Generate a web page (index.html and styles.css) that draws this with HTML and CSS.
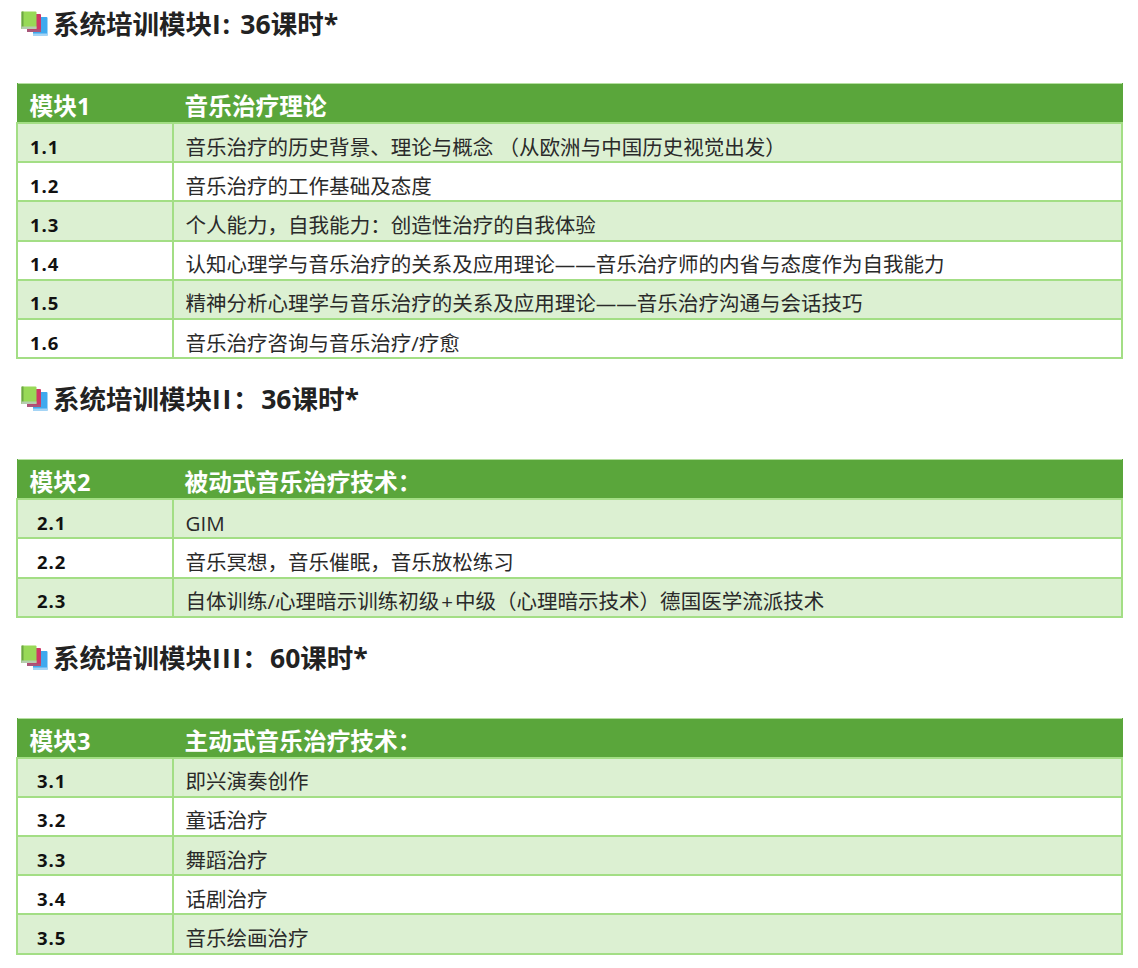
FILE: index.html
```html
<!DOCTYPE html>
<html lang="zh-CN">
<head>
<meta charset="utf-8">
<title>系统培训模块</title>
<link rel="stylesheet" href="styles.css">
</head>
<body>
<svg width="0" height="0" class="defs" aria-hidden="true">
  <symbol id="books" viewBox="0 0 28 26">
    <rect x="12" y="6" width="14.5" height="19" rx="1" fill="#3fa9ee"/>
    <rect x="12" y="22.5" width="14.5" height="2.5" fill="#a4d4f5"/>
    <rect x="6" y="3" width="14" height="18" rx="1" fill="#cf3767"/>
    <rect x="6" y="18.5" width="14" height="2.5" fill="#a8577a"/>
    <rect x="0.5" y="0.5" width="15" height="17.5" rx="1" fill="#98d957"/>
    <rect x="0.5" y="0.5" width="2" height="17.5" fill="#6da544"/>
    <rect x="0.5" y="15.5" width="15" height="2.5" fill="#b6cdb0"/>
  </symbol>
</svg>

<section class="module module-1">
  <h2 class="title"><svg class="icon"><use href="#books"/></svg>系统培训模块<span class="wide">I: </span>36课时*</h2>
  <table class="grid">
    <thead><tr><th class="num">模块1</th><th class="name">音乐治疗理论</th></tr></thead>
    <tbody>
      <tr><td class="num">1.1</td><td>音乐治疗的历史背景、理论与概念 （从欧洲与中国历史视觉出发）</td></tr>
      <tr><td class="num">1.2</td><td>音乐治疗的工作基础及态度</td></tr>
      <tr><td class="num">1.3</td><td>个人能力，自我能力：创造性治疗的自我体验</td></tr>
      <tr><td class="num">1.4</td><td>认知心理学与音乐治疗的关系及应用理论——音乐治疗师的内省与态度作为自我能力</td></tr>
      <tr><td class="num">1.5</td><td>精神分析心理学与音乐治疗的关系及应用理论——音乐治疗沟通与会话技巧</td></tr>
      <tr><td class="num">1.6</td><td>音乐治疗咨询与音乐治疗/疗愈</td></tr>
    </tbody>
  </table>
</section>

<section class="module module-2">
  <h2 class="title"><svg class="icon"><use href="#books"/></svg>系统培训模块<span class="wide">II：</span>36课时*</h2>
  <table class="grid indented">
    <thead><tr><th class="num">模块2</th><th class="name">被动式音乐治疗技术：</th></tr></thead>
    <tbody>
      <tr><td class="num">2.1</td><td>GIM</td></tr>
      <tr><td class="num">2.2</td><td>音乐冥想，音乐催眠，音乐放松练习</td></tr>
      <tr><td class="num">2.3</td><td>自体训练/心理暗示训练初级<span class="plus">+</span>中级（心理暗示技术）德国医学流派技术</td></tr>
    </tbody>
  </table>
</section>

<section class="module module-3">
  <h2 class="title"><svg class="icon"><use href="#books"/></svg>系统培训模块<span class="wide">III：</span>60课时*</h2>
  <table class="grid indented">
    <thead><tr><th class="num">模块3</th><th class="name">主动式音乐治疗技术：</th></tr></thead>
    <tbody>
      <tr><td class="num">3.1</td><td>即兴演奏创作</td></tr>
      <tr><td class="num">3.2</td><td>童话治疗</td></tr>
      <tr><td class="num">3.3</td><td>舞蹈治疗</td></tr>
      <tr><td class="num">3.4</td><td>话剧治疗</td></tr>
      <tr><td class="num">3.5</td><td>音乐绘画治疗</td></tr>
    </tbody>
  </table>
</section>
</body>
</html>
```

FILE: styles.css
```css
html, body {
  margin: 0;
  padding: 0;
  background: #fff;
}
body {
  width: 1138px;
  height: 968px;
  overflow: hidden;
  padding: 5px 15px 0 16px;
  box-sizing: border-box;
  font-family: "Open Sans", "Noto Sans CJK SC", sans-serif;
  color: #2a2a2a;
}
.defs {
  position: absolute;
}
.module-2,
.module-3 {
  margin-top: 21px;
}
.title {
  display: flex;
  align-items: center;
  height: 38px;
  margin: 0 0 41px;
  font-size: 26.5px;
  font-weight: 700;
  line-height: 38px;
  color: #222;
  white-space: pre;
}
.module-1 .title {
  margin-bottom: 40px;
}
.wide {
  letter-spacing: 1.7px;
}
.module-3 .wide {
  letter-spacing: 1.3px;
}
.plus {
  margin: 0 2px;
}
.icon {
  width: 28px;
  height: 26px;
  margin: 0 4px 0 5px;
  flex: none;
}
.grid {
  width: 1107px;
  table-layout: fixed;
  border-collapse: collapse;
}
.grid thead tr {
  border-top: 1px solid #b5dfa0;
}
.grid th, .grid td {
  text-align: left;
  vertical-align: middle;
  white-space: nowrap;
}
.grid th {
  height: 33px;
  padding: 4px 0 0 11.5px;
  background: #5aa63b;
  color: #fff;
  font-size: 23.7px;
  font-weight: 700;
  border: 0;
  border-left: 1px solid #5aa63b;
}
.grid th.name {
  border-left: 0;
  border-right: 1px solid #5aa63b;
}
.grid td {
  height: 29.2px;
  padding: 8px 0 0 11.5px;
  font-size: 20.52px;
  line-height: 28px;
  border: 2px solid #a3de85;
}
.grid th.num, .grid td.num {
  width: 156px;
  box-sizing: border-box;
  padding-left: 12px;
}
.grid td.num {
  font-weight: 700;
  font-size: 18.5px;
  letter-spacing: 1px;
  color: #111;
}
.grid.indented td.num {
  padding-left: 19px;
}
.grid tbody tr:nth-child(odd) td {
  background: #dcf0d2;
}
```
